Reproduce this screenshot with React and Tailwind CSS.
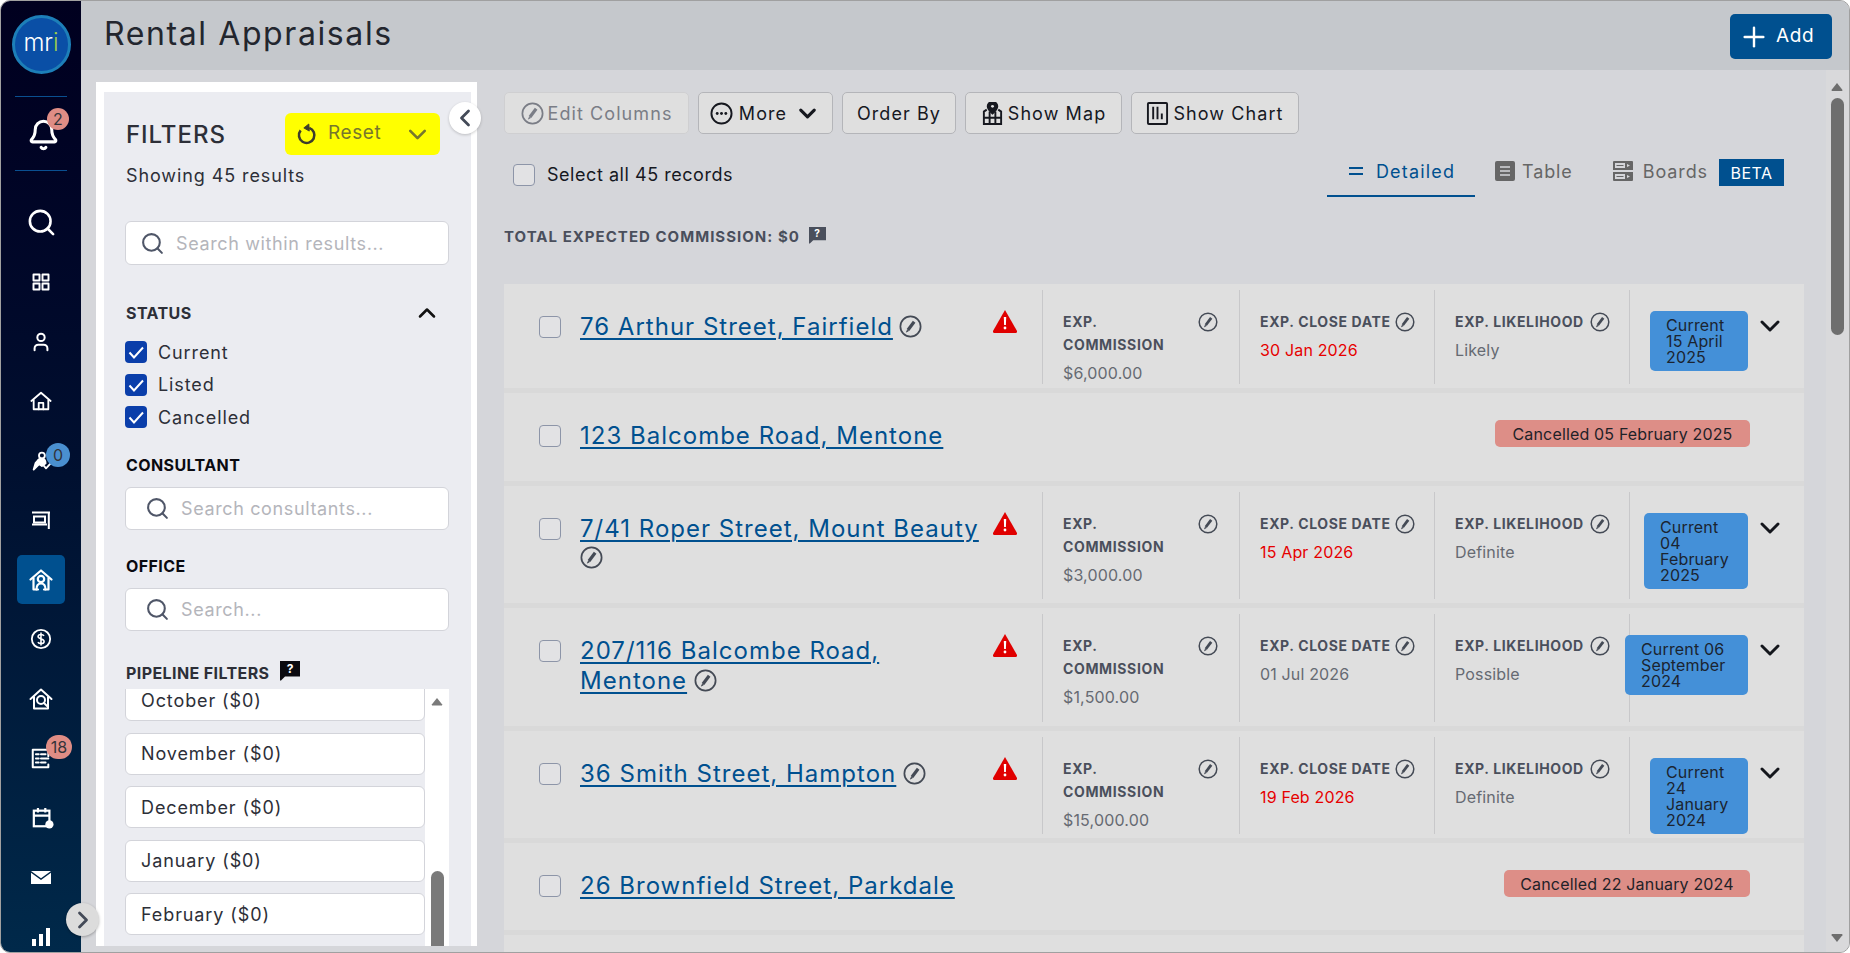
import React from "react";
import { Search, Bell, ChevronDown, ChevronUp, ChevronLeft, ChevronRight, Plus, User } from "lucide-react";

const Edit = ({ className = "" }) => (
  <svg viewBox="0 0 20 20" className={className} fill="none" stroke="currentColor">
    <circle cx="10" cy="10" r="8.8" strokeWidth="1.5" />
    <path d="M13.2 5.800 7.800 13" strokeWidth="2.800" />
    <path d="M7.300 12.900 6.400 14.900 8.400 13.700Z" fill="currentColor" strokeWidth=".6" />
  </svg>
);

const Warn = () => (
  <svg viewBox="0 0 24 23" className="w-6 h-[23px] shrink-0 text-[#e00000]">
    <path d="M12 0 24 21a1.4 1.4 0 0 1-1.2 2H1.2A1.4 1.4 0 0 1 0 21Z" fill="currentColor" />
    <path d="M10.8 7h2.4l-.3 8h-1.8Z" fill="#fff" />
    <circle cx="12" cy="18" r="1.4" fill="#fff" />
  </svg>
);

const Help = ({ className = "" }) => (
  <svg viewBox="0 0 20 20" className={className}>
    <path d="M0 0h20v15.5H5L1 19.5H0Z" fill="currentColor" />
    <text x="10" y="12" textAnchor="middle" fontSize="12" fontWeight="700" fill="#fff" fontFamily="Inter,sans-serif">?</text>
  </svg>
);

const Box = ({ className = "" }) => (
  <span className={`block w-[22px] h-[22px] shrink-0 rounded-[4px] border border-[#8d95a8] bg-[#e2e2e4] ${className}`} />
);

const Checked = () => (
  <span className="flex items-center justify-center w-[22px] h-[22px] shrink-0 rounded-[4px] bg-[#0a3eaa]">
    <svg viewBox="0 0 22 22" className="w-[22px] h-[22px]" fill="none" stroke="#fff" strokeWidth="2">
      <path d="m4.5 11.5 4.5 5 9-10" />
    </svg>
  </span>
);

const Input = ({ placeholder, iconX = "pl-[14px]", gap = "gap-[11px]", h = "h-[43px]" }) => (
  <div className={`flex items-center ${h} ${iconX} ${gap} bg-white rounded-md border border-[#d3d4da] ml-[-1px] mr-[0px]`}>
    <Search className="w-[25px] h-[25px] text-[#4f5668] shrink-0" strokeWidth={2} />
    <span className="text-[18px] text-[#b4b5bb] tracking-[0.035em]">{placeholder}</span>
  </div>
);

const Heading = ({ children, className = "" }) => (
  <div className={`h-5 leading-5 text-[16px] font-bold tracking-[0.025em] ${className}`}>{children}</div>
);

const Stroke = ({ children, className = "w-[22px] h-[22px]", sw = 2 }) => (
  <svg viewBox="0 0 24 24" className={className} fill="none" stroke="currentColor" strokeWidth={sw} strokeLinejoin="round" strokeLinecap="round">
    {children}
  </svg>
);

const GridIcon = () => (
  <Stroke className="w-[18px] h-[18px]" sw={2.6}>
    <rect x="2" y="2" width="8" height="8" /><rect x="14" y="2" width="8" height="8" />
    <rect x="2" y="14" width="8" height="8" /><rect x="14" y="14" width="8" height="8" />
  </Stroke>
);
const HouseIcon = () => (
  <Stroke><path d="M1.5 12 12 3l10.5 9" /><path d="M4 11v10h16V11" /><path d="M9.5 21v-7h5v7" /></Stroke>
);
const ClimberIcon = () => (
  <Stroke>
    <circle cx="13" cy="6" r="3.2" />
    <path d="M8 12c1-2 3-2.8 5-2.6 3 .3 4 2.6 4 5l-4 3-3-2-6 6 2-7z" fill="currentColor" />
    <path d="m15 17 2.5 3L23 14" />
  </Stroke>
);
const DeskIcon = () => (
  <svg viewBox="0 0 18 18" className="w-[18px] h-[18px]" fill="none" stroke="currentColor" strokeWidth="2">
    <path d="M0 1.500h18M16.800 1v17" />
    <rect x="2" y="5.500" width="11" height="6" />
    <path d="M0 13.500h15" />
  </svg>
);
const HouseUser = () => (
  <Stroke className="w-[24px] h-[24px]" sw={2.2}>
    <path d="M1.5 11.5 12 2.5l10.5 9" /><path d="M4.5 10v11.5h4.5M19.5 10v11.5H15" />
    <circle cx="12" cy="11" r="3.2" /><path d="M7.5 21.5c0-4 2-6 4.5-6s4.5 2 4.5 6" />
  </Stroke>
);
const DollarIcon = () => (
  <svg viewBox="0 0 24 24" className="w-[22px] h-[22px]" fill="none" stroke="currentColor" strokeWidth="2">
    <circle cx="12" cy="12" r="10" />
    <path d="M15.3 8.5c-.6-1-1.800-1.500-3.300-1.500-1.800 0-3.200.9-3.200 2.400 0 3.300 6.600 1.800 6.600 5.200 0 1.500-1.500 2.400-3.400 2.400-1.500 0-2.800-.6-3.400-1.700M12 5v14" strokeWidth="1.700" />
  </svg>
);
const HouseSearch = () => (
  <Stroke className="w-[24px] h-[24px]" sw={2}>
    <path d="M1.5 12 12 2.5 22.500 12" /><path d="M5 10v11.500h14V10" />
    <circle cx="12" cy="13" r="4" /><path d="m15 16 3 3" />
  </Stroke>
);
const DocIcon = () => (
  <Stroke sw={2.200}>
    <path d="M20 10V3H3v19h17v-3" /><path d="M6.500 8h3M6.500 12.500h3M6.500 17h3M12 8h5M12 12.500h8M12 17h5" />
  </Stroke>
);
const CalIcon = () => (
  <svg viewBox="0 0 24 24" className="w-[22px] h-[22px] ml-[3px]" fill="none" stroke="currentColor" strokeWidth="2.400">
    <rect x="2" y="4" width="17" height="17" /><path d="M2 9.500h17M6.500 1v5M14.500 1v5" />
    <circle cx="19" cy="19" r="4.500" fill="currentColor" stroke="none" />
  </svg>
);
const MailIcon = () => (
  <svg viewBox="0 0 20 13" className="w-[20px] h-[13px]" fill="currentColor">
    <path d="M0 0h20L10 7.200Z" /><path d="M0 1.800v11.200h20V1.800L10 9Z" />
  </svg>
);
const BarsIcon = () => (
  <svg viewBox="0 0 18 18" className="w-[18px] h-[18px]" fill="currentColor">
    <rect x="0" y="11" width="4" height="7" /><rect x="7" y="6" width="4" height="12" /><rect x="14" y="0" width="4" height="18" />
  </svg>
);

const Badge = ({ children, color, className = "" }) => (
  <span className={`absolute flex items-center justify-center rounded-full text-[16px] text-[#33343a] ${color} ${className}`}>{children}</span>
);

const NavRow = ({ children, active }) => (
  <div className="relative flex items-center justify-center h-[59.5px] text-white shrink-0">
    {active ? (
      <div className="flex items-center justify-center w-[48px] h-[49px] rounded-[5px] bg-[#00508f]">{children}</div>
    ) : children}
  </div>
);

const Sidebar = () => (
  <aside className="w-[80px] shrink-0 flex flex-col items-stretch bg-gradient-to-b from-[#00001f] via-[#001030] to-[#00294a] overflow-hidden">
    <div className="flex justify-center pt-[14px] shrink-0">
      <div className="flex items-center justify-center w-[59px] h-[59px] rounded-full bg-[#0a4fa6] border-[3px] border-[#1d7fb8] text-[24px] font-light leading-none text-white pb-1">
        <span>mr</span><span className="text-[#9ed04a]">i</span>
      </div>
    </div>
    <div className="h-px shrink-0 bg-[#0a4f90] mx-[14px] mt-[22px]" />
    <div className="relative flex items-center justify-center h-[73px] shrink-0 text-white">
      <Bell className="w-[33px] h-[36px] ml-[4px] mt-[2px]" strokeWidth={2.200} />
      <Badge color="bg-[#df8d85]" className="w-[22px] h-[22px] left-[46px] top-[11px]">2</Badge>
    </div>
    <div className="h-px shrink-0 bg-[#0a4f90] mx-[14px]" />
    <div className="flex flex-col pt-[22px] shrink-0">
      <NavRow><Search className="w-[31px] h-[31px]" strokeWidth={2} /></NavRow>
      <NavRow><GridIcon /></NavRow>
      <NavRow><User className="w-[22px] h-[22px]" strokeWidth={2.200} /></NavRow>
      <NavRow><HouseIcon /></NavRow>
      <NavRow>
        <ClimberIcon />
        <Badge color="bg-[#4a90d0]" className="w-[24px] h-[24px] left-[45px] top-[12px]">0</Badge>
      </NavRow>
      <NavRow><DeskIcon /></NavRow>
      <NavRow active><HouseUser /></NavRow>
      <NavRow><DollarIcon /></NavRow>
      <NavRow><HouseSearch /></NavRow>
      <NavRow>
        <DocIcon />
        <Badge color="bg-[#df8d85]" className="w-[26px] h-[24px] left-[45px] top-[6px]">18</Badge>
      </NavRow>
      <NavRow><CalIcon /></NavRow>
      <NavRow><MailIcon /></NavRow>
      <NavRow><BarsIcon /></NavRow>
    </div>
  </aside>
);

const ResetIcon = () => (
  <svg viewBox="0 0 22 24" className="w-[20px] h-[22px] text-[#3d3d2c]" fill="none" stroke="currentColor" strokeWidth="2.800">
    <path d="M13.500 5.300A8.500 8.500 0 1 1 4 8" />
    <path d="M13 1 7.500 5.300l6 3.500Z" fill="currentColor" strokeWidth="1" />
  </svg>
);

const months = ["November ($0)", "December ($0)", "January ($0)", "February ($0)"];

const Month = ({ children, className = "" }) => (
  <div className={`flex items-center h-[42px] shrink-0 pl-[15px] bg-white border border-[#d3d4da] rounded-md text-[18px] text-[#2d2f38] tracking-[0.05em] ${className}`}>{children}</div>
);

const Filters = () => (
  <div className="relative w-[381px] shrink-0 ml-[15px] mt-[12px] mb-[6px] mr-[27px]">
    <div className="h-full bg-white pl-[8px] pr-[6px] pt-[10px] overflow-hidden">
      <div className="flex flex-col h-full bg-[#ebecf1] pl-[22px] pr-[22px] pt-[21px] overflow-hidden">
        <div className="flex items-center justify-between h-[42px] shrink-0">
          <span className="text-[24px] font-medium text-[#2d2f38] tracking-[0.04em] mt-[2px]">FILTERS</span>
          <div className="flex h-[42px] w-[155px] mr-[9px] text-[#77772c]">
            <div className="flex items-center w-[109px] pl-[12px] gap-[11px] bg-[#ffff00] rounded-l-md text-[19px] tracking-[0.03em]">
              <ResetIcon /><span className="mb-[2px]">Reset</span>
            </div>
            <div className="flex items-center justify-center flex-1 bg-[#ffff00] rounded-r-md">
              <ChevronDown className="w-[29px] h-[29px]" strokeWidth={2.200} />
            </div>
          </div>
        </div>
        <div className="h-6 leading-6 mt-[9px] text-[18px] text-[#2d2f38] tracking-[0.05em] shrink-0">Showing 45 results</div>
        <div className="mt-[33px] shrink-0"><Input placeholder="Search within results..." h="h-[44px]" /></div>
        <div className="flex items-center justify-between h-[26px] mt-[35px] shrink-0">
          <Heading className="text-[#2d2f38]">STATUS</Heading>
          <ChevronUp className="w-[28px] h-[28px] mr-[8px] text-[#111]" strokeWidth={2.200} />
        </div>
        <div className="flex flex-col gap-[10.500px] mt-[15px] shrink-0 -ml-px text-[18px] text-[#2d2f38] tracking-[0.05em]">
          {["Current", "Listed", "Cancelled"].map((s) => (
            <div key={s} className="flex items-center gap-[11px] h-[22px]"><Checked /><span>{s}</span></div>
          ))}
        </div>
        <Heading className="mt-[27px] text-[#0a0a10] shrink-0">CONSULTANT</Heading>
        <div className="mt-[12px] shrink-0"><Input placeholder="Search consultants..." iconX="pl-[19px]" /></div>
        <Heading className="mt-[26px] text-[#0a0a10] shrink-0">OFFICE</Heading>
        <div className="mt-[12px] shrink-0"><Input placeholder="Search..." iconX="pl-[19px]" /></div>
        <div className="flex items-start gap-[11px] mt-[32px] h-5 shrink-0">
          <Heading className="text-[#2d2f38] tracking-[0.04em]">PIPELINE FILTERS</Heading>
          <Help className="w-[20px] h-[20px] text-[#0a0a10] -mt-[2px]" />
        </div>
        <div className="flex flex-1 min-h-0 mt-[6px] -ml-px overflow-hidden bg-white">
          <div className="flex flex-col gap-[11.500px] w-[300px] shrink-0 bg-[#ebecf1] -mt-[10px]">
            <Month>October ($0)</Month>
            {months.map((m) => <Month key={m}>{m}</Month>)}
          </div>
          <div className="flex flex-col items-center flex-1 pt-[9px]">
            <svg viewBox="0 0 12 9" className="w-[12px] h-[9px] text-[#7a7a7a]"><path d="M6 0 12 7.500v1.500H0V7.500Z" fill="currentColor" /></svg>
            <div className="w-[13px] h-[90px] mt-[165px] rounded-t-full bg-[#7a7a7a]" />
          </div>
        </div>
      </div>
    </div>
    <button className="absolute left-[353px] top-[20px] flex items-center justify-center w-8 h-8 rounded-full bg-white shadow-[0_1px_3px_rgba(0,0,0,0.2)] text-[#444a58]">
      <ChevronLeft className="w-[28px] h-[28px]" strokeWidth={2.400} />
    </button>
  </div>
);

const ToolBtn = ({ children, w, disabled, gap = "gap-[4px]" }) => (
  <button className={`flex items-center justify-center ${gap} h-[42px] ${w} rounded-[5px] border bg-[#dfdfdf] text-[18px] tracking-[0.06em] ${disabled ? "border-[#cfcfd1] text-[#7a7d86]" : "border-[#b4b5b9] text-[#16181f]"}`}>
    {children}
  </button>
);

const Toolbar = () => (
  <div className="flex gap-[9px] shrink-0">
    <ToolBtn w="w-[185px]" disabled><Edit className="w-[23px] h-[23px]" /> Edit Columns</ToolBtn>
    <ToolBtn w="w-[135px]" gap="gap-[6px]">
      <svg viewBox="0 0 24 24" className="w-[23px] h-[23px]" fill="none" stroke="currentColor" strokeWidth="2">
        <circle cx="12" cy="12" r="10.500" />
        <circle cx="7.500" cy="12" r="1.500" fill="currentColor" stroke="none" /><circle cx="12" cy="12" r="1.500" fill="currentColor" stroke="none" /><circle cx="16.500" cy="12" r="1.500" fill="currentColor" stroke="none" />
      </svg>
      More <ChevronDown className="w-[27px] h-[27px] ml-[1px]" strokeWidth={2.800} />
    </ToolBtn>
    <ToolBtn w="w-[114px]">Order By</ToolBtn>
    <ToolBtn w="w-[157px]">
      <svg viewBox="0 0 24 24" className="w-[23px] h-[23px]" fill="none" stroke="currentColor" strokeWidth="2">
        <path d="M12 0c-3 0-5 2-5 4.500C7 7.500 12 12 12 12s5-4.500 5-7.500C17 2 15 0 12 0Z" fill="currentColor" />
        <circle cx="12" cy="4.500" r="1.500" fill="#dfdfdf" stroke="none" />
        <path d="M6 8 3 10v13h18V10l-3-2M3 16.500h18M9 10v13M15 10v13" />
      </svg>
      Show Map
    </ToolBtn>
    <ToolBtn w="w-[168px]">
      <svg viewBox="0 0 24 24" className="w-[23px] h-[23px]" fill="none" stroke="currentColor" strokeWidth="2">
        <rect x="2" y="1" width="20" height="22" rx="1" /><path d="M7.500 5v13M12 5v13M16.500 12v6" />
      </svg>
      Show Chart
    </ToolBtn>
  </div>
);

const Tabs = () => (
  <div className="flex items-start h-[38px] mr-[20px] tracking-[0.05em] text-[18px]">
    <div className="w-[148px] h-[38px] pl-[22px] border-b-2 border-[#00508f] text-[#00508f] mr-[20px]">
      <div className="flex items-center gap-[13px] h-[24px] tracking-[0.065em]">
        <svg viewBox="0 0 14 8" className="w-[14px] h-[8px]" fill="currentColor"><rect width="14" height="2" /><rect y="6" width="14" height="2" /></svg>
        <span>Detailed</span>
      </div>
    </div>
    <div className="flex items-center gap-[7px] h-[24px] text-[#666] mr-[40px]">
      <svg viewBox="0 0 20 20" className="w-[20px] h-[20px]"><rect width="20" height="20" rx="2" fill="currentColor" /><path d="M5 6h10M5 10h10M5 14h10" stroke="#d5d6da" strokeWidth="1.500" /></svg>
      <span>Table</span>
    </div>
    <div className="flex items-center gap-[10px] h-[24px] text-[#666] mr-[11px]">
      <svg viewBox="0 0 20 20" className="w-[20px] h-[20px]" fill="currentColor"><path fillRule="evenodd" d="M1 0h18a1 1 0 0 1 1 1v8H0V1a1 1 0 0 1 1-1Zm1 2v5h10V2Zm12 1v3l3-1.500ZM0 11h20v8a1 1 0 0 1-1 1H1a1 1 0 0 1-1-1Zm2 2v5h10v-5Zm12 1v3l3-1.500Z" /><path d="M3.500 4h7v1h-7ZM3.500 15h7v1h-7Z" /></svg>
      <span>Boards</span>
    </div>
    <div className="flex items-center justify-center w-[65px] h-[27px] bg-[#00508f] text-white text-[16px] tracking-[0.03em]">BETA</div>
  </div>
);

const Col = ({ label, value, red, w }) => (
  <div className={`${w} shrink-0 mt-[6px] mb-[4px] border-l border-[#c8c8ca] pl-[20px] pt-[20px]`}>
    <div className="flex justify-between items-start w-[155px]">
      <span className="text-[14px] leading-[23px] font-bold text-[#4a4f5c] tracking-[0.045em] whitespace-nowrap">{label}</span>
      <Edit className="w-[20px] h-[20px] text-[#444a55] mt-[2px] shrink-0" />
    </div>
    <div className={`text-[16px] leading-[23px] mt-[6px] tracking-[0.01em] ${red ? "text-[#e60000]" : "text-[#666a72]"}`}>{value}</div>
  </div>
);

const Status = ({ lines, w }) => (
  <div className="flex-1 mt-[6px] mb-[4px] border-l border-[#c8c8ca] flex justify-end items-start pt-[21px] min-w-0">
    <div className={`${w} shrink-0 py-[6px] pl-[16px] rounded-[5px] bg-[#4490d8] text-[16px] leading-4 text-[#1b2430] tracking-[0.01em]`}>
      {lines.map((l) => <div key={l} className="whitespace-nowrap">{l}</div>)}
    </div>
    <ChevronDown className="w-[32px] h-[32px] ml-[6px] mr-[18px] -mt-[1px] text-[#14161c] shrink-0" strokeWidth={2.200} />
  </div>
);

const Address = ({ children }) => (
  <a className="text-[24px] leading-[30px] text-[#00508f] underline underline-offset-[3px] decoration-2 tracking-[0.042em]">{children}</a>
);

const Detail = ({ h, address, comm, close, red, like, lines, w }) => (
  <div className={`flex ${h} shrink-0 bg-[#dfdfdf]`}>
    <div className="flex w-[538px] shrink-0 pl-[35px] pt-[28px]">
      <Box className="mt-[4px] mr-[19px]" />
      <div className="flex-1 min-w-0">{address}</div>
      <div className="mr-[25px] mt-[-2px] ml-[6px]"><Warn /></div>
    </div>
    <Col w="w-[197px]" label={<>EXP.<br />COMMISSION</>} value={comm} />
    <Col w="w-[195px]" label="EXP. CLOSE DATE" value={close} red={red} />
    <Col w="w-[195px]" label="EXP. LIKELIHOOD" value={like} />
    <Status lines={lines} w={w} />
  </div>
);

const Cancelled = ({ address, text, w, h = "h-[88px]" }) => (
  <div className={`flex items-start ${h} shrink-0 bg-[#dfdfdf] pl-[35px]`}>
    <Box className="mt-[32px] mr-[19px]" />
    <div className="flex-1 pt-[28px]"><Address>{address}</Address></div>
    <div className={`${w} mt-[27px] mr-[54px] flex items-center justify-center h-[27px] rounded-[5px] bg-[#dd8e87] text-[16px] text-[#1f2228] tracking-[0.01em] whitespace-nowrap`}>{text}</div>
  </div>
);

const Pen = ({ className = "" }) => <Edit className={`inline-block w-[23px] h-[23px] text-[#444a55] align-[-3px] ${className}`} />;

const Content = () => (
  <div className="flex-1 min-w-0 flex flex-col pt-[22px] overflow-hidden">
    <div className="pr-[22px] shrink-0"><Toolbar /></div>
    <div className="flex items-start justify-between mt-[25px] pr-[22px] shrink-0">
      <div className="flex items-center gap-[12px] pl-[9px] pt-[5px] h-[27px] text-[18px] tracking-[0.03em] text-[#16181f]">
        <Box />
        <span className="-mt-[1px]">Select all 45 records</span>
      </div>
      <Tabs />
    </div>
    <div className="flex items-center gap-[9px] h-5 mt-[30px] shrink-0 text-[15px] font-bold text-[#4a4f5c] tracking-[0.068em]">
      <span>TOTAL EXPECTED COMMISSION: $0</span>
      <Help className="w-[17px] h-[17px] -mt-[4px]" />
    </div>
    <div className="flex flex-col gap-[5px] mt-[37px] mr-[22px] flex-1 min-h-0 overflow-hidden bg-[#d9d9d9]">
      <Detail h="h-[104px]" address={<><Address>76 Arthur Street, Fairfield</Address> <Pen className="ml-[2px]" /></>} comm="$6,000.00" close="30 Jan 2026" red like="Likely" lines={["Current", "15 April", "2025"]} w="w-[98px]" />
      <Cancelled address="123 Balcombe Road, Mentone" text="Cancelled 05 February 2025" w="w-[255px]" />
      <Detail h="h-[117px]" address={<><Address>7/41 Roper Street, Mount Beauty</Address><br /><Pen className="mt-[2px]" /></>} comm="$3,000.00" close="15 Apr 2026" red like="Definite" lines={["Current", "04", "February", "2025"]} w="w-[104px]" />
      <Detail h="h-[118px]" address={<><Address>207/116 Balcombe Road,</Address><br /><Address>Mentone</Address> <Pen className="ml-[2px]" /></>} comm="$1,500.00" close="01 Jul 2026" like="Possible" lines={["Current 06", "September", "2024"]} w="w-[123px]" />
      <Detail h="h-[107px]" address={<><Address>36 Smith Street, Hampton</Address> <Pen className="ml-[2px]" /></>} comm="$15,000.00" close="19 Feb 2026" red like="Definite" lines={["Current", "24", "January", "2024"]} w="w-[98px]" />
      <Cancelled h="h-[87px]" address="26 Brownfield Street, Parkdale" text="Cancelled 22 January 2024" w="w-[246px]" />
      <div className="h-[60px] shrink-0 bg-[#dfdfdf]" />
    </div>
  </div>
);

const Scrollbar = () => (
  <div className="w-[23px] shrink-0 flex flex-col items-center bg-[#d9d9db] pt-[13px] pb-[10px] pr-[1px]">
    <svg viewBox="0 0 12 9" className="w-[12px] h-[8px] text-[#6e6e6e]"><path d="M6 0 12 7.500v1.500H0V7.500Z" fill="currentColor" /></svg>
    <div className="w-[13px] h-[237px] mt-[7px] rounded-full bg-[#6e6e6e]" />
    <div className="flex-1" />
    <svg viewBox="0 0 12 9" className="w-[12px] h-[8px] text-[#6e6e6e]"><path d="M6 9 12 1.500V0H0v1.500Z" fill="currentColor" /></svg>
  </div>
);

export default function App() {
  return (
    <div className="h-screen w-full bg-white overflow-hidden font-[family-name:Inter,sans-serif]">
      <div className="relative flex h-full border border-[#a0a0a0] rounded-[10px] overflow-hidden bg-[#d5d6da]">
        <Sidebar />
        <main className="flex-1 min-w-0 flex flex-col">
          <header className="flex items-center justify-between h-[69px] shrink-0 bg-[#c5c8cc] pl-[23px] pr-[17px]">
            <h1 className="text-[32px] font-normal text-[#23262e] tracking-[0.05em] mb-[3px]">Rental Appraisals</h1>
            <button className="flex items-center gap-[6px] w-[102px] h-[45px] pl-[8px] mt-[2px] rounded-[5px] bg-[#00508f] text-white text-[19px] tracking-[0.03em]">
              <Plus className="w-[32px] h-[32px]" strokeWidth={1.800} />
              <span>Add</span>
            </button>
          </header>
          <div className="flex flex-1 min-h-0">
            <Filters />
            <Content />
            <Scrollbar />
          </div>
        </main>
        <button className="absolute left-[65px] top-[902px] flex items-center justify-center w-[33px] h-[33px] rounded-full bg-[#dcdcdc] shadow-[0_1px_3px_rgba(0,0,0,0.3)] text-[#444a58]">
          <ChevronRight className="w-[28px] h-[28px]" strokeWidth={2.400} />
        </button>
      </div>
    </div>
  );
}
